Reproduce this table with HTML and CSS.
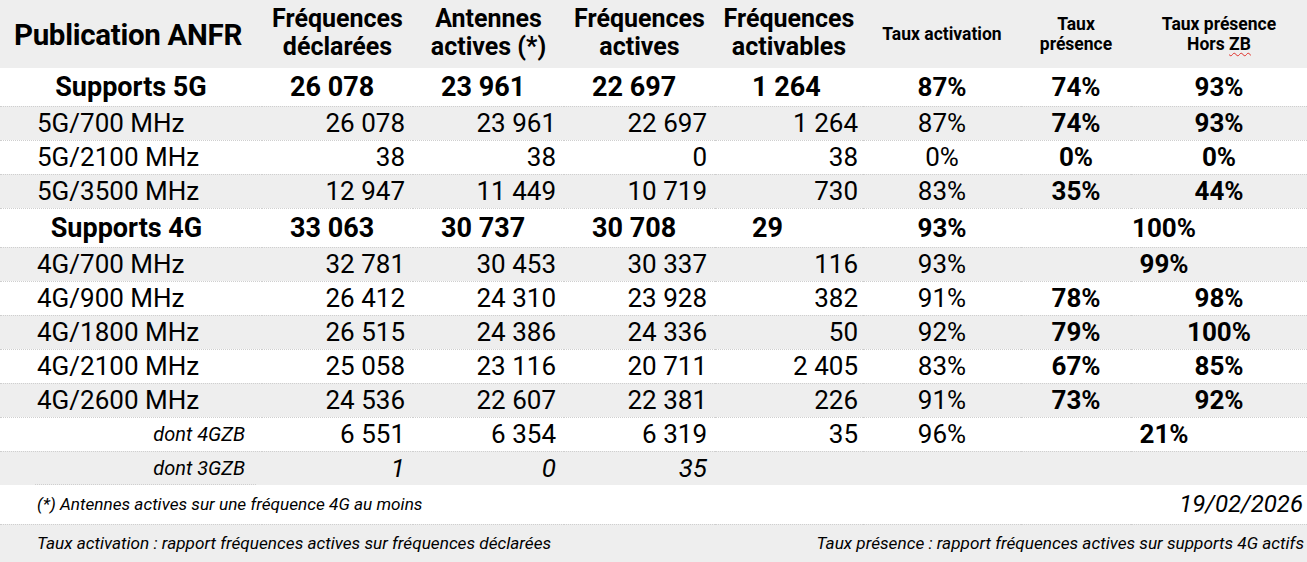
FILE: index.html
```html
<!DOCTYPE html>
<html lang="fr">
<head>
<meta charset="utf-8">
<title>Publication ANFR</title>
<link rel="stylesheet" href="styles.css">
</head>
<body>
<table class="grid">
  <colgroup>
    <col class="c1"><col class="c2"><col class="c3"><col class="c4"><col class="c5"><col class="c6"><col class="c7"><col class="c8">
  </colgroup>
  <thead>
    <tr class="head">
      <th class="title">Publication ANFR</th>
      <th class="big">Fréquences<br>déclarées</th>
      <th class="big">Antennes<br>actives (*)</th>
      <th class="big">Fréquences<br>actives</th>
      <th class="big">Fréquences<br>activables</th>
      <th class="small">Taux activation</th>
      <th class="small">Taux<br>présence</th>
      <th class="small">Taux présence<br>Hors <span class="spell">ZB</span></th>
    </tr>
  </thead>
  <tbody>
    <tr class="sum s5">
      <td class="lbl">Supports 5G</td>
      <td class="bv">26 078</td>
      <td class="bv">23 961</td>
      <td class="bv">22 697</td>
      <td class="bv bv5">1 264</td>
      <td class="pct">87%</td>
      <td class="pct">74%</td>
      <td class="pct">93%</td>
    </tr>
    <tr class="row gray">
      <td class="band">5G/700 MHz</td>
      <td class="num">26 078</td>
      <td class="num">23 961</td>
      <td class="num">22 697</td>
      <td class="num n5">1 264</td>
      <td class="pct light">87%</td>
      <td class="pct">74%</td>
      <td class="pct">93%</td>
    </tr>
    <tr class="row">
      <td class="band">5G/2100 MHz</td>
      <td class="num">38</td>
      <td class="num">38</td>
      <td class="num">0</td>
      <td class="num n5">38</td>
      <td class="pct light">0%</td>
      <td class="pct">0%</td>
      <td class="pct">0%</td>
    </tr>
    <tr class="row gray">
      <td class="band">5G/3500 MHz</td>
      <td class="num">12 947</td>
      <td class="num">11 449</td>
      <td class="num">10 719</td>
      <td class="num n5">730</td>
      <td class="pct light">83%</td>
      <td class="pct">35%</td>
      <td class="pct">44%</td>
    </tr>
    <tr class="sum s4">
      <td class="lbl lbl4">Supports 4G</td>
      <td class="bv">33 063</td>
      <td class="bv">30 737</td>
      <td class="bv">30 708</td>
      <td class="bv bv5">29</td>
      <td class="pct">93%</td>
      <td class="pct" colspan="2">100%</td>
    </tr>
    <tr class="row gray">
      <td class="band">4G/700 MHz</td>
      <td class="num">32 781</td>
      <td class="num">30 453</td>
      <td class="num">30 337</td>
      <td class="num n5">116</td>
      <td class="pct light">93%</td>
      <td class="pct" colspan="2">99%</td>
    </tr>
    <tr class="row">
      <td class="band">4G/900 MHz</td>
      <td class="num">26 412</td>
      <td class="num">24 310</td>
      <td class="num">23 928</td>
      <td class="num n5">382</td>
      <td class="pct light">91%</td>
      <td class="pct">78%</td>
      <td class="pct">98%</td>
    </tr>
    <tr class="row gray">
      <td class="band">4G/1800 MHz</td>
      <td class="num">26 515</td>
      <td class="num">24 386</td>
      <td class="num">24 336</td>
      <td class="num n5">50</td>
      <td class="pct light">92%</td>
      <td class="pct">79%</td>
      <td class="pct">100%</td>
    </tr>
    <tr class="row">
      <td class="band">4G/2100 MHz</td>
      <td class="num">25 058</td>
      <td class="num">23 116</td>
      <td class="num">20 711</td>
      <td class="num n5">2 405</td>
      <td class="pct light">83%</td>
      <td class="pct">67%</td>
      <td class="pct">85%</td>
    </tr>
    <tr class="row gray">
      <td class="band">4G/2600 MHz</td>
      <td class="num">24 536</td>
      <td class="num">22 607</td>
      <td class="num">22 381</td>
      <td class="num n5">226</td>
      <td class="pct light">91%</td>
      <td class="pct">73%</td>
      <td class="pct">92%</td>
    </tr>
    <tr class="row">
      <td class="sub">dont 4GZB</td>
      <td class="num">6 551</td>
      <td class="num">6 354</td>
      <td class="num">6 319</td>
      <td class="num n5">35</td>
      <td class="pct light">96%</td>
      <td class="pct" colspan="2">21%</td>
    </tr>
    <tr class="row gray open">
      <td class="sub partial">dont 3GZB</td>
      <td class="num it">1</td>
      <td class="num it">0</td>
      <td class="num it">35</td>
      <td></td>
      <td></td>
      <td></td>
      <td></td>
    </tr>
    <tr class="note">
      <td class="note-l" colspan="4">(*) Antennes actives sur une fréquence 4G au moins</td>
      <td class="date" colspan="4">19/02/2026</td>
    </tr>
    <tr class="note gray last">
      <td class="note-l" colspan="4">Taux activation : rapport fréquences actives sur fréquences déclarées</td>
      <td class="note-r" colspan="4">Taux présence : rapport fréquences actives sur supports 4G actifs</td>
    </tr>
  </tbody>
</table>
</body>
</html>
```

FILE: styles.css
```css
html, body {
  margin: 0;
  padding: 0;
  background: #ffffff;
}

body {
  font-family: Roboto, "Liberation Sans", sans-serif;
  color: #000;
  width: 1307px;
  height: 562px;
  overflow: hidden;
}

.grid {
  border-collapse: collapse;
  table-layout: fixed;
  width: 1307px;
}

.c1 { width: 262px; }
.c2 { width: 151px; }
.c3 { width: 151px; }
.c4 { width: 151px; }
.c5 { width: 148px; }
.c6 { width: 158px; }
.c7 { width: 110px; }
.c8 { width: 176px; }

th, td {
  padding: 0;
  white-space: nowrap;
  vertical-align: middle;
}

.head {
  height: 68px;
  background: #eeeeee;
}

.head th {
  font-weight: 700;
  text-align: center;
}

.head .title {
  font-size: 29.5px;
  letter-spacing: -0.3px;
  padding-top: 1px;
  padding-right: 6px;
}

.head .big {
  font-size: 25px;
  line-height: 28px;
  padding-bottom: 2px;
}

.head .small {
  font-size: 17.5px;
  line-height: 20px;
}

.spell {
  text-decoration: underline wavy #e0302a;
  text-decoration-thickness: 1px;
  text-underline-offset: 2px;
}

tbody tr {
  border-bottom: 1px dotted #cfcfcf;
}

tbody tr.open {
  border-bottom: none;
}

.gray {
  background: #eeeeee;
}

.sum {
  font-weight: 700;
  font-size: 26px;
}

.s5 { height: 38px; }
.s4 { height: 39px; }

.row {
  height: 34px;
  font-size: 26px;
}

.lbl {
  text-align: center;
  font-size: 27px;
}

.lbl4 {
  padding-right: 9px;
}

.bv {
  text-align: left;
  padding-left: 28px;
  font-size: 27px;
}

.bv5 {
  padding-left: 37px;
}

.band {
  text-align: left;
  padding-left: 37px;
}

.sub {
  text-align: right;
  padding-right: 17px;
  font-style: italic;
  font-size: 20px;
}

.partial {
  background-image: repeating-linear-gradient(90deg, #cfcfcf 0 1px, transparent 1px 2px);
  background-size: 221px 1px;
  background-position: 35px 100%;
  background-repeat: no-repeat;
}

.num {
  text-align: right;
  padding-right: 8px;
}

.n5 {
  padding-right: 5px;
}

.it {
  font-style: italic;
}

.pct {
  text-align: center;
  font-weight: 700;
}

.pct.light {
  font-weight: 400;
}

.note {
  height: 39px;
}

.note.last {
  height: 38px;
  border-bottom: none;
}

.note-l {
  text-align: left;
  padding-left: 37px;
  font-style: italic;
  font-size: 17.2px;
}

.note-r {
  text-align: right;
  padding-right: 3px;
  font-style: italic;
  font-size: 17.2px;
}

.date {
  text-align: right;
  padding-right: 4px;
  font-style: italic;
  font-size: 24px;
}
```
